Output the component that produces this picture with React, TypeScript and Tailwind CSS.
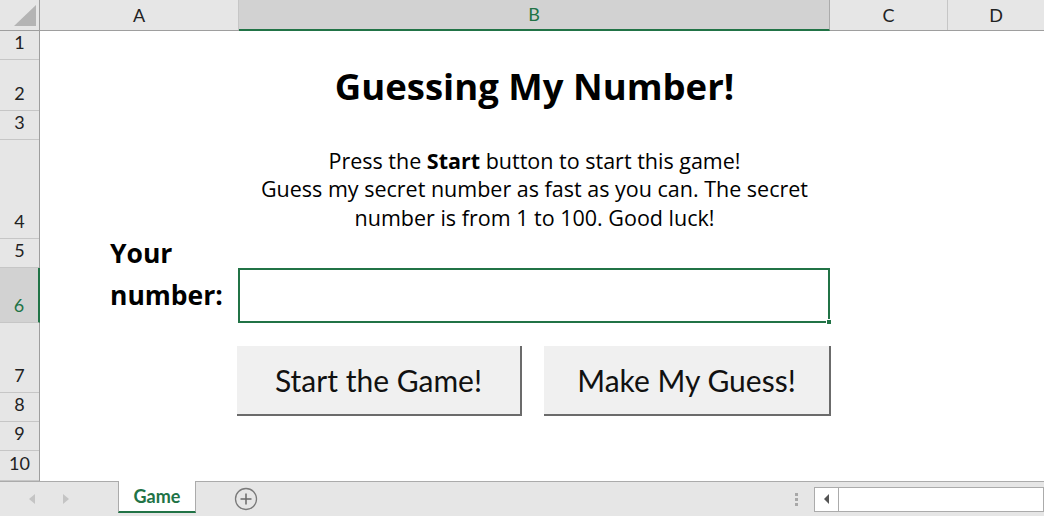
const rows = [
  { n: 1, h: 'h-[29px]' },
  { n: 2, h: 'h-[51px]' },
  { n: 3, h: 'h-[29px]' },
  { n: 4, h: 'h-[99px]' },
  { n: 5, h: 'h-[29px]' },
  { n: 6, h: 'h-[55px]' },
  { n: 7, h: 'h-[70px]' },
  { n: 8, h: 'h-[29px]' },
  { n: 9, h: 'h-[29px]' },
  { n: 10, h: 'h-[30px]' },
]

const ColumnHeaders = () => (
  <div className="flex h-[31px] bg-[#e6e6e6] border-b border-[#9e9e9e] text-[18px] text-[#222]">
    <div className="w-[40px] border-r border-[#9e9e9e] flex items-end justify-end pr-[3px] pb-[4px]">
      <svg width="22" height="21" viewBox="0 0 22 21">
        <polygon points="22,0 22,21 0,21" fill="#b4b4b4" />
      </svg>
    </div>
    <div className="w-[199px] border-r border-[#c6c6c6] flex items-center justify-center">A</div>
    <div className="w-[591px] bg-[#d2d2d2] border-r border-[#ababab] border-b-2 border-b-[#217346] flex items-center justify-center text-[#217346] -mb-px">
      B
    </div>
    <div className="w-[118px] border-r border-[#c6c6c6] flex items-center justify-center">C</div>
    <div className="flex-1 flex items-center justify-center">D</div>
  </div>
)

const RowHeaders = () => (
  <div className="w-[40px] flex flex-col bg-[#e6e6e6] border-r border-[#9e9e9e] text-[18px] text-[#222]">
    {rows.map((r) =>
      r.n === 6 ? (
        <div
          key={r.n}
          className={`${r.h} flex items-end justify-center pb-[3px] bg-[#d2d2d2] border-b border-[#c6c6c6] text-[#217346] border-r-2 border-r-[#217346] -mr-px`}
        >
          {r.n}
        </div>
      ) : (
        <div key={r.n} className={`${r.h} flex items-end justify-center pb-[3px] border-b border-[#c6c6c6]`}>
          {r.n}
        </div>
      )
    )}
  </div>
)

const GameButton = ({ label, w }: { label: string; w: string }) => (
  <button
    className={`${w} h-[70px] bg-[#f0f0f0] border-r-2 border-b-2 border-[#6b6b6b] text-[30px] text-[#111] font-['Lato',sans-serif] flex items-center justify-center`}
  >
    {label}
  </button>
)

const Sheet = () => (
  <div className="flex-1 flex flex-col bg-white font-['Open_Sans',sans-serif] text-black">
    {/* rows 1-3 */}
    <div className="h-[29px]" />
    <div className="h-[51px] flex">
      <div className="w-[199px]" />
      <div className="w-[591px] flex items-end justify-center pb-[3px]">
        <h1 className="text-[36.5px] font-bold leading-[44px] whitespace-nowrap">Guessing My Number!</h1>
      </div>
    </div>
    <div className="h-[29px]" />
    {/* row 4 */}
    <div className="h-[99px] flex">
      <div className="w-[199px]" />
      <div className="w-[591px] flex items-end justify-center pb-[7px]">
        <p className="text-[21.5px] leading-[28.5px] text-center whitespace-nowrap">
          Press the <b>Start</b> button to start this game!
          <br />
          Guess my secret number as fast as you can. The secret
          <br />
          number is from 1 to 100. Good luck!
        </p>
      </div>
    </div>
    {/* rows 5-6 */}
    <div className="h-[84px] flex">
      <div className="w-[199px] flex items-start pl-[70px]">
        <span className="block -mt-[7px] text-[26.5px] font-bold leading-[42px]">
          Your
          <br />
          number:
        </span>
      </div>
      <div className="w-[591px] flex flex-col">
        <div className="h-[29px]" />
        <div className="relative h-[55px] -ml-px border-2 border-[#217346] bg-white">
          <span className="absolute -right-[4px] -bottom-[4px] w-[6px] h-[6px] bg-[#217346] border border-white" />
        </div>
      </div>
    </div>
    {/* row 7 */}
    <div className="h-[70px] pt-[23px] pl-[197px] flex gap-[22px] overflow-visible">
      <GameButton label="Start the Game!" w="w-[285px]" />
      <GameButton label="Make My Guess!" w="w-[287px]" />
    </div>
    <div className="h-[88px]" />
  </div>
)

const TabBar = () => (
  <div className="h-[35px] flex bg-[#e6e6e6] border-t border-[#ababab] font-['Lato',sans-serif]">
    <div className="w-[118px] flex items-center">
      <svg width="10" height="12" viewBox="0 0 10 12" className="ml-[27px]">
        <polygon points="8,1 8,11 2,6" fill="#c4c4c4" />
      </svg>
      <svg width="10" height="12" viewBox="0 0 10 12" className="ml-[24px]">
        <polygon points="2,1 2,11 8,6" fill="#c4c4c4" />
      </svg>
    </div>
    <div className="w-[78px] h-[32px] -mt-px bg-white border-x border-[#ababab] border-b-2 border-b-[#217346] flex items-center justify-center text-[18px] font-bold text-[#217346]">
      Game
    </div>
    <div className="flex items-center pl-[38px]">
      <svg width="24" height="24" viewBox="0 0 24 24">
        <circle cx="12" cy="12" r="10.5" fill="none" stroke="#7a7a7a" strokeWidth="1.3" />
        <path d="M12 6.5v11M6.5 12h11" stroke="#6a6a6a" strokeWidth="1.5" />
      </svg>
    </div>
    <div className="flex-1" />
    <div className="flex flex-col gap-[2px] justify-center mr-[16px]">
      <span className="w-[3px] h-[3px] bg-[#a8a8a8]" />
      <span className="w-[3px] h-[3px] bg-[#a8a8a8]" />
      <span className="w-[3px] h-[3px] bg-[#a8a8a8]" />
    </div>
    <div className="w-[230px] flex items-center">
      <div className="w-full h-[25px] bg-white border border-[#ababab] flex">
        <div className="w-[24px] border-r border-[#ababab] flex items-center justify-center">
          <svg width="8" height="12" viewBox="0 0 8 12">
            <polygon points="6,1 6,11 1,6" fill="#555" />
          </svg>
        </div>
      </div>
    </div>
  </div>
)

const App = () => {
  return (
    <div className="w-[1044px] h-[516px] flex flex-col overflow-hidden bg-white font-['Lato',sans-serif]">
      <ColumnHeaders />
      <div className="flex h-[450px]">
        <RowHeaders />
        <Sheet />
      </div>
      <TabBar />
    </div>
  )
}

export default App
